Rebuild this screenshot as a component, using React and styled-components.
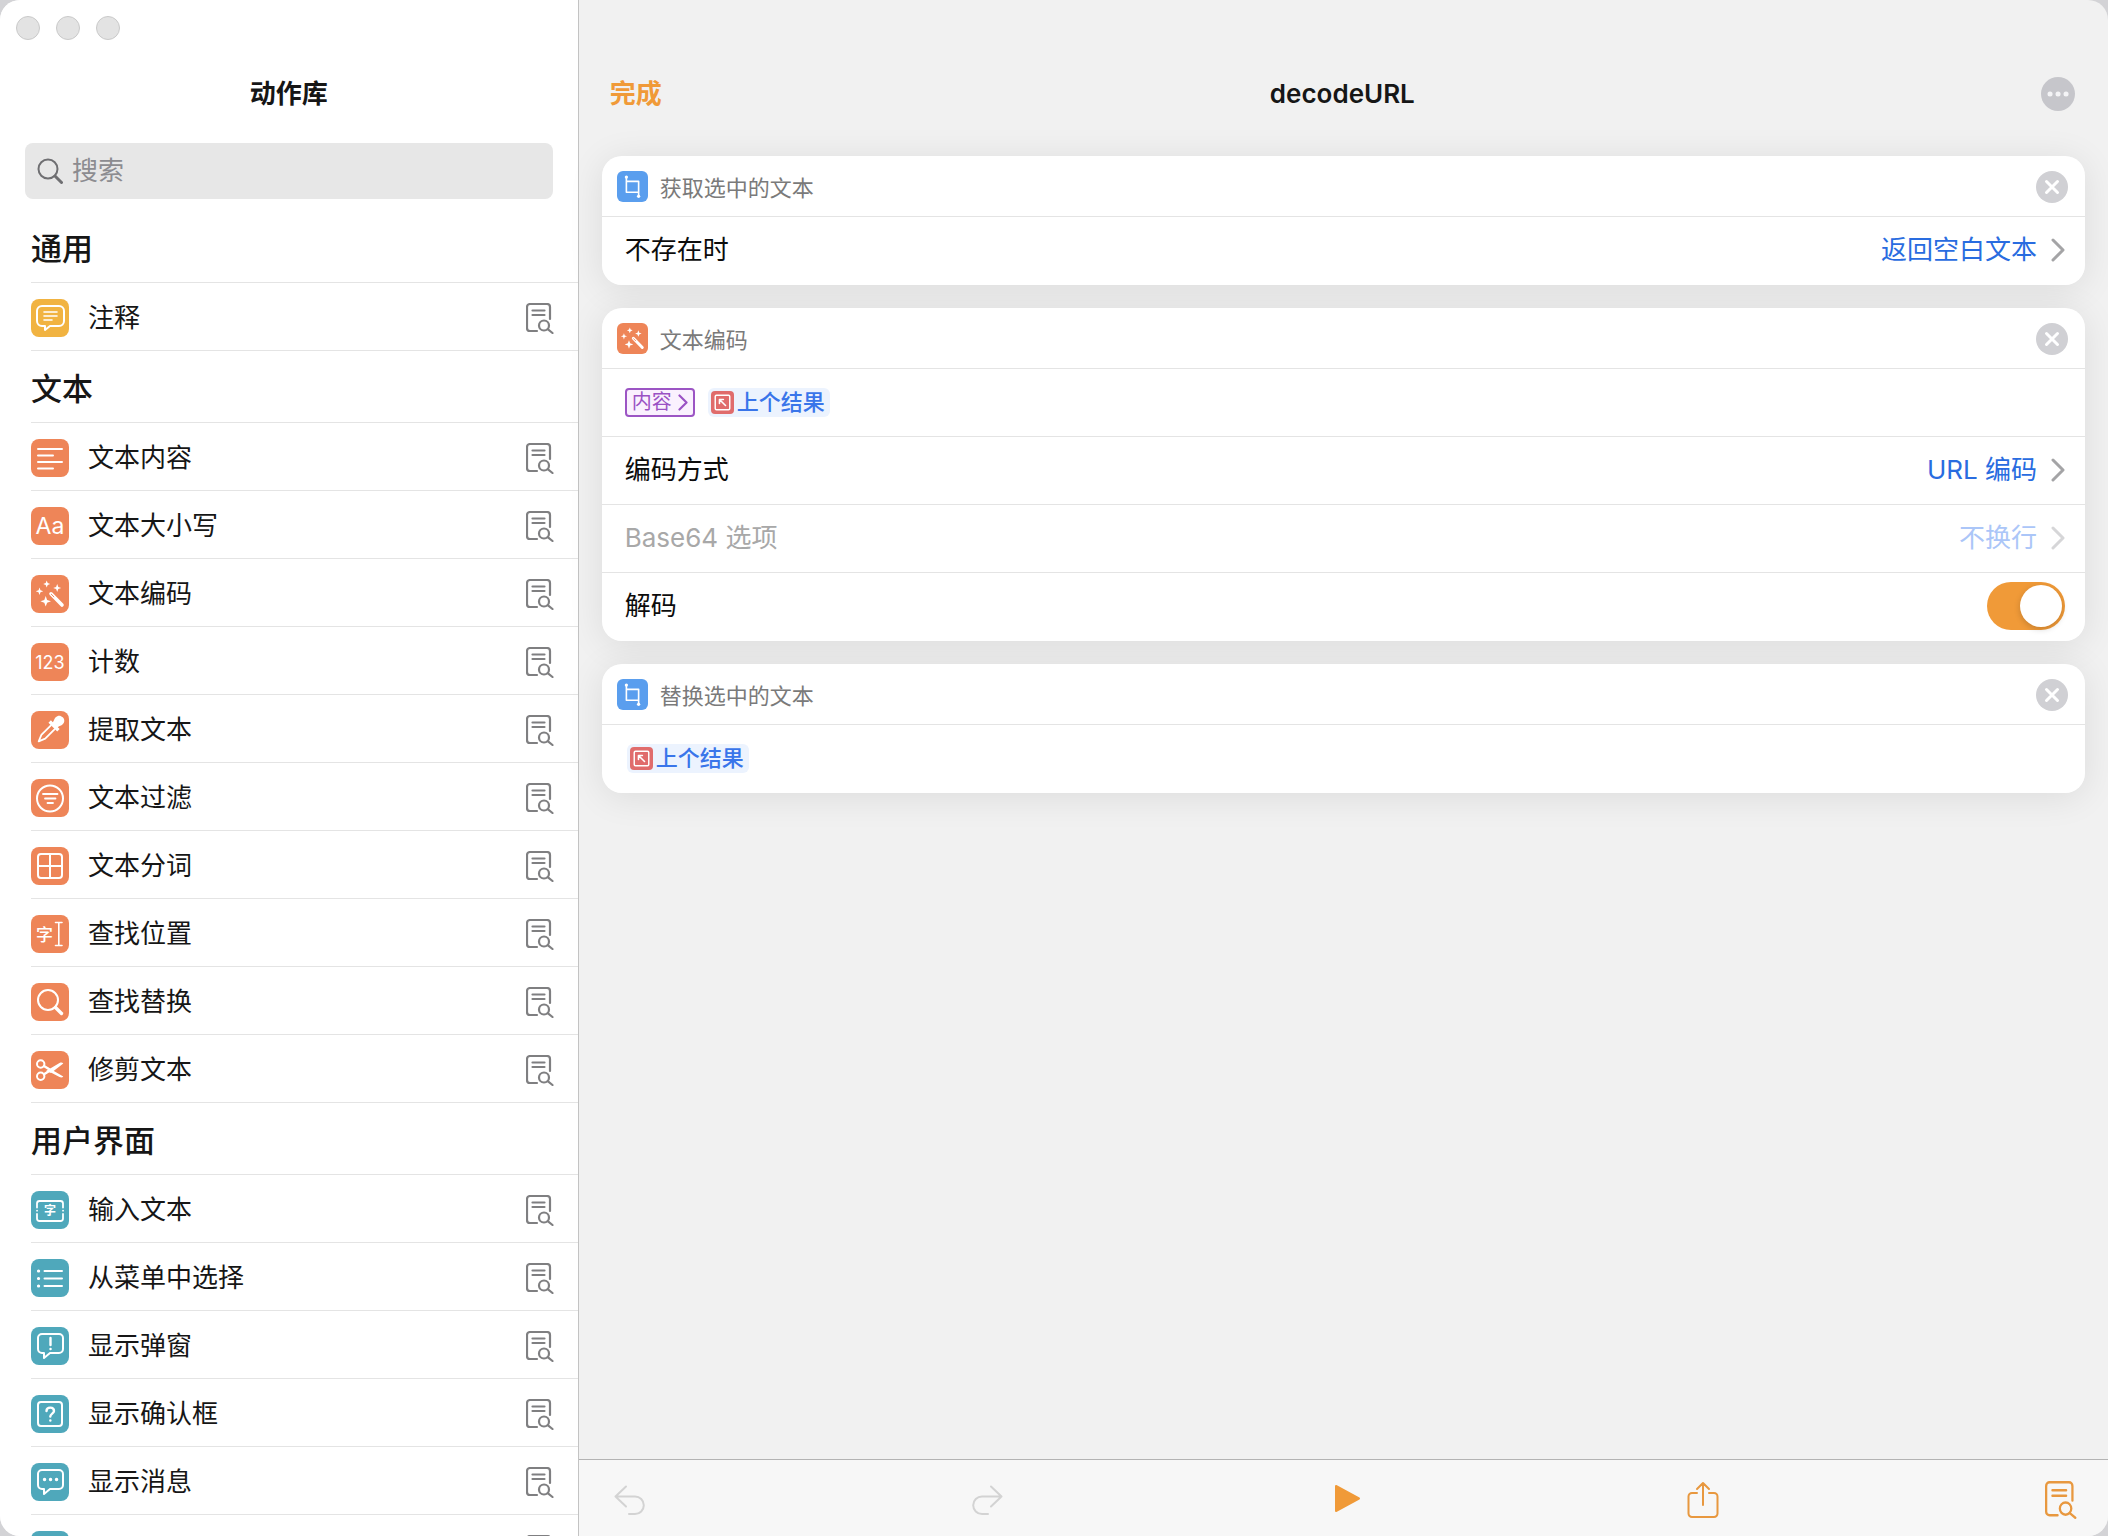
import React, { useState } from 'react';
import styled, { createGlobalStyle } from 'styled-components';

const GlobalStyle = createGlobalStyle`
    * {
        box-sizing: border-box;
    }
    body {
        margin: 0;
        background: #d3d3d6;
        color: #161616;
        font-family: Inter, "Noto Sans CJK SC", sans-serif;
        font-size: 26px;
        line-height: 38px;
    }
    button, input {
        font: inherit;
        color: inherit;
    }
    h1, h2, h3, ul {
        margin: 0;
        padding: 0;
    }
    ul {
        list-style: none;
    }
`;

const Window = styled.div`
    display: grid;
    grid-template-columns: minmax(320px, 14fr) 37fr;
    height: 100vh;
    border-radius: 20px;
    overflow: hidden;
    background: #f1f1f1;
`;

const Sidebar = styled.aside`
    display: flex;
    flex-direction: column;
    min-height: 0;
    background: #ffffff;
    border-right: 1px solid #c3c3c3;
`;

const TrafficLights = styled.div`
    display: flex;
    gap: 16px;
    padding: 16px;
`;

const Light = styled.button`
    width: 24px;
    height: 24px;
    padding: 0;
    border: 1px solid #c9c9c9;
    border-radius: 50%;
    background: #e3e3e3;
`;

const SidebarTitle = styled.h1`
    font-size: 26px;
    font-weight: 700;
    line-height: 76px;
    text-align: center;
`;

const SearchBox = styled.label`
    display: flex;
    align-items: center;
    gap: 9px;
    height: 56px;
    margin: 11px 25px 12px;
    padding: 0 12px;
    border-radius: 8px;
    background: #e7e7e7;
    color: #6f6f72;
`;

const SearchInput = styled.input`
    flex: 1;
    min-width: 0;
    padding: 0;
    border: 0;
    outline: 0;
    background: transparent;
    color: #161616;
    &::placeholder {
        color: #8c8c90;
        opacity: 1;
    }
`;

const Library = styled.div`
    flex: 1;
    min-height: 0;
    overflow: hidden;
    padding-left: 31px;
`;

const GroupTitle = styled.h2`
    height: 72px;
    padding-top: 16px;
    border-bottom: 1px solid #e4e4e4;
    font-size: 31px;
    font-weight: 500;
    line-height: 44px;
`;

const ActionItem = styled.li`
    display: flex;
    align-items: center;
    gap: 19px;
    height: 68px;
    padding: 3px 24px 0 0;
    border-bottom: 1px solid #e4e4e4;
`;

const ActionName = styled.span`
    flex: 1;
`;

const Badge = styled.svg`
    flex: none;
    width: ${props => props.$size}px;
    height: ${props => props.$size}px;
    border-radius: ${props => (props.$size > 34 ? 8 : props.$size > 26 ? 6 : 4)}px;
    background: ${props => props.$color};
    fill: none;
    stroke: #ffffff;
    stroke-width: 2;
    stroke-linecap: round;
    stroke-linejoin: round;
    text {
        fill: #ffffff;
        stroke: none;
        text-anchor: middle;
    }
    .solid {
        fill: #ffffff;
        stroke: none;
    }
`;

const Drawing = styled.svg`
    display: block;
    flex: none;
    fill: none;
    stroke: currentColor;
    stroke-width: ${props => props.$weight || 2};
    stroke-linecap: round;
    stroke-linejoin: round;
`;

const PlainButton = styled.button`
    display: flex;
    align-items: center;
    gap: 14px;
    padding: 0;
    border: 0;
    background: none;
    color: ${props => props.$color || 'inherit'};
`;

const Editor = styled.main`
    display: flex;
    flex-direction: column;
    min-width: 0;
    min-height: 0;
`;

const EditorHeader = styled.header`
    display: grid;
    grid-template-columns: 1fr auto 1fr;
    align-items: center;
    height: 132px;
    padding: 56px 33px 0 31px;
`;

const DoneButton = styled(PlainButton)`
    color: #f09a38;
    font-weight: 700;
`;

const EditorTitle = styled.h1`
    font-size: 26px;
    font-weight: 600;
`;

const MoreButton = styled(PlainButton)`
    justify-self: end;
`;

const Flow = styled.div`
    flex: 1;
    display: flex;
    flex-direction: column;
    gap: 23px;
    min-height: 0;
    padding: 24px 23px;
    isolation: isolate;
`;

const Card = styled.section`
    position: relative;
    border-radius: 20px;
    background: #ffffff;
    /* the shadow sits under every card, so that it never tints a neighbour */
    &::before {
        content: "";
        position: absolute;
        inset: 0;
        z-index: -1;
        border-radius: 20px;
        box-shadow: 0 4px 36px rgba(0, 0, 0, 0.09);
    }
`;

const CardHeader = styled.div`
    display: flex;
    align-items: center;
    gap: 12px;
    height: 61px;
    padding: 1px 17px 0 15px;
    border-bottom: 1px solid #e4e4e4;
`;

const CardTitle = styled.h3`
    flex: 1;
    padding-top: 2px;
    color: #7a7a7a;
    font-size: 22px;
    font-weight: 400;
    line-height: 32px;
`;

const CardRow = styled.div`
    display: flex;
    align-items: center;
    gap: 13px;
    height: 68px;
    padding: 0 20px 1px ${props => props.$indent || 23}px;
    border-bottom: 1px solid #e4e4e4;
    &:last-child {
        border-bottom-color: transparent;
    }
`;

const RowLabel = styled.span`
    flex: 1;
    color: ${props => (props.$muted ? '#a8a8a8' : '#0c0c0c')};
`;

const ParamTag = styled.button`
    display: flex;
    align-items: center;
    gap: 6px;
    height: 29px;
    padding: 0 5px;
    border: 2px solid #9c55c4;
    border-radius: 4px;
    background: #faf1fe;
    color: #9a52c4;
    font-size: 20px;
    line-height: 24px;
`;

const VariablePill = styled.button`
    display: flex;
    align-items: center;
    gap: 3px;
    height: 29px;
    padding: 0 5px 0 3px;
    border: 0;
    border-radius: 6px;
    background: #ecf3fe;
    color: #3975ea;
    font-size: 22px;
    font-weight: 500;
    line-height: 28px;
`;

const Switch = styled.input`
    appearance: none;
    width: 78px;
    height: 48px;
    margin: 0;
    padding: 3px;
    border-radius: 24px;
    background: ${props => (props.checked ? '#f09a38' : '#dddddd')};
    &::before {
        content: "";
        display: block;
        width: 42px;
        height: 42px;
        margin-left: ${props => (props.checked ? 30 : 0)}px;
        border-radius: 50%;
        background: #ffffff;
        box-shadow: 0 2px 6px rgba(0, 0, 0, 0.18);
    }
`;

const Toolbar = styled.footer`
    display: flex;
    align-items: center;
    justify-content: space-between;
    height: 77px;
    padding: 4px 31px 0 35px;
    border-top: 1px solid #b3b3b3;
    background: #f7f7f7;
`;

const bubble = 'M11 7h17a4 4 0 0 1 4 4v11a4 4 0 0 1-4 4h-9l-6 5v-5h-2a4 4 0 0 1-4-4V11a4 4 0 0 1 4-4z';

const glyphs = {
    comment: (
        <>
            <path d="M11 7h17a5 5 0 0 1 5 5v10a5 5 0 0 1-5 5h-9l-5 4v-4h-3a5 5 0 0 1-5-5V12a5 5 0 0 1 5-5z" />
            <path d="M13 13h13M13 17h13M13 21h8" strokeWidth="1.6" />
        </>
    ),
    lines: <path d="M7 10h24M7 16.5h15M7 23h24M7 29.5h15" />,
    letters: <text x="19" y="27" fontSize="23">Aa</text>,
    wand: (
        <>
            <path
                className="solid"
                d="M8.5 12.5l1 2.8 2.8 1-2.8 1-1 2.8-1-2.8-2.8-1 2.8-1zM15.7 5.5l1 2.5 2.5 1-2.5 1-1 2.5-1-2.5-2.5-1 2.5-1zM26.2 9l1.1 2.9 2.9 1.1-2.9 1.1-1.1 2.9-1.1-2.9-2.9-1.1 2.9-1.1zM14.7 21l1.4 3.9 3.9 1.4-3.9 1.4-1.4 3.9-1.4-3.9-3.9-1.4 3.9-1.4z"
            />
            <path d="M20 18.8l11 11.2" strokeWidth="3.6" />
            <path d="M20.3 19.2l2.6 2.6" stroke="#ee8558" strokeWidth="1" />
        </>
    ),
    digits: <text x="19" y="25.5" fontSize="18">123</text>,
    dropper: (
        <g transform="rotate(45 19 19)">
            <path className="solid" d="M19 1c3.2 0 5 2.2 5 5 0 2.2-1.2 3.4-1.5 5.5h2.7V15H12.800v-3.500h2.700C15.200 9.400 14 8.200 14 6c0-2.800 1.800-5 5-5z" />
            <path d="M16.3 15v13.500l2.700 6.500 2.700-6.500V15" strokeWidth="1.8" />
        </g>
    ),
    filter: (
        <>
            <circle cx="19" cy="19.5" r="13" />
            <path d="M12 15h14.5M14 19.5h10.5M16.5 24h5.5" strokeWidth="1.8" />
        </>
    ),
    grid: (
        <>
            <rect x="7" y="7" width="24" height="24" rx="3" />
            <path d="M19 7v24M7 19h24" />
        </>
    ),
    cursor: (
        <>
            <text x="13.5" y="25.5" fontSize="17" fontWeight="500">字</text>
            <path d="M24.5 7.5h6.5M24.5 30.5h6.5M27.8 7.5v23" strokeWidth="1.6" />
        </>
    ),
    search: (
        <>
            <circle cx="17" cy="17" r="10" />
            <path d="M24.5 24.5l6 6" strokeWidth="3.4" />
        </>
    ),
    scissors: (
        <>
            <circle cx="9.7" cy="13" r="3.7" />
            <circle cx="9.7" cy="25.3" r="3.7" />
            <path d="M13 15l6 3.8M13 23.3l6-3.8" strokeWidth="2.4" />
            <path className="solid" d="M15 20l13.5-8c1.500-.8 3-.6 3.800.5L20 22zM16.500 16.300L32.300 25.500c-.8 1.100-2.300 1.300-3.800.5L17 20z" />
        </>
    ),
    input: (
        <>
            <path d="M6 16.500v-4A2.500 2.500 0 0 1 8.500 10h21a2.500 2.500 0 0 1 2.500 2.500v4M6 23v4.500A2.500 2.500 0 0 0 8.500 30h21a2.500 2.500 0 0 0 2.500-2.500V23M6 19.700h.1M32 19.700h.1" strokeWidth="1.8" />
            <text x="19" y="24" fontSize="12" fontWeight="700">字</text>
        </>
    ),
    list: (
        <>
            <path d="M13.500 12h17.500M13.500 19.500h17.500M13.500 27h17.500" />
            <path d="M7.500 12h.1M7.500 19.500h.1M7.500 27h.1" strokeWidth="3.2" />
        </>
    ),
    alert: (
        <>
            <path d={bubble} />
            <path d="M19.500 11v7M19.500 22h.1" strokeWidth="2.4" />
        </>
    ),
    confirm: (
        <>
            <rect x="7" y="7" width="24" height="24" rx="3" />
            <path d="M15.500 16c0-4.500 7.500-4.500 7.500 0 0 2.500-3.700 2.700-3.700 5.500M19.300 25.500h.1" strokeWidth="2.4" />
        </>
    ),
    message: (
        <>
            <path d={bubble} />
            <path d="M13.500 16.500h.1M19.500 16.500h.1M25.500 16.500h.1" strokeWidth="3.4" />
        </>
    ),
    crop: (
        <>
            <path d="M11.500 7.500V26h15V12.700h-15M26.500 26v5" />
            <circle className="solid" cx="11.5" cy="7.5" r="2" />
            <circle className="solid" cx="26.5" cy="31" r="2" />
        </>
    ),
    result: (
        <>
            <rect x="7" y="7" width="24" height="24" rx="2" strokeWidth="2.4" />
            <path d="M14 20.500V14h6.500M14 14l10 10" strokeWidth="2.6" />
        </>
    ),
};

const yellow = '#f1b341';
const orange = '#ee8558';
const teal = '#4fa8bb';
const blue = '#5a9eee';
const red = '#e06c6c';

const groups = [
    { title: '通用', color: yellow, actions: [['注释', 'comment']] },
    {
        title: '文本',
        color: orange,
        actions: [
            ['文本内容', 'lines'],
            ['文本大小写', 'letters'],
            ['文本编码', 'wand'],
            ['计数', 'digits'],
            ['提取文本', 'dropper'],
            ['文本过滤', 'filter'],
            ['文本分词', 'grid'],
            ['查找位置', 'cursor'],
            ['查找替换', 'search'],
            ['修剪文本', 'scissors'],
        ],
    },
    {
        title: '用户界面',
        color: teal,
        actions: [
            ['输入文本', 'input'],
            ['从菜单中选择', 'list'],
            ['显示弹窗', 'alert'],
            ['显示确认框', 'confirm'],
            ['显示消息', 'message'],
            ['', ''],
        ],
    },
];

const Glyph = ({ name, color, size = 38 }) => (
    <Badge viewBox="0 0 38 38" $size={size} $color={color} aria-hidden="true">
        {glyphs[name]}
    </Badge>
);

const DocIcon = ({ width = 28, height = 31, weight = 2 }) => (
    <Drawing width={width} height={height} viewBox="0 0 28 31" preserveAspectRatio="none" $weight={weight}>
        <path d="M24 16V4a3 3 0 0 0-3-3H4a3 3 0 0 0-3 3v21a3 3 0 0 0 3 3h7" />
        <path d="M6.500 7.500h12M6.500 12h12" />
        <circle cx="18" cy="22.5" r="5" />
        <path d="M21.700 26.200l4.800 3.800" />
    </Drawing>
);

const Chevron = ({ color = '#a4a4a6', width = 14, height = 24, weight = 3 }) => (
    <Drawing width={width} height={height} viewBox="0 0 14 24" color={color} $weight={weight}>
        <path d="M2 2l10 10L2 22" />
    </Drawing>
);

const CloseButton = () => (
    <PlainButton aria-label="移除">
        <Drawing width="32" height="32" viewBox="0 0 32 32" $weight="3" color="#ffffff">
            <circle cx="16" cy="16" r="16" fill="#d0d0d4" stroke="none" />
            <path d="M10.500 10.500l11 11M21.500 10.500l-11 11" />
        </Drawing>
    </PlainButton>
);

const ActionCard = ({ title, icon, color, children }) => (
    <Card>
        <CardHeader>
            <Glyph name={icon} color={color} size={31} />
            <CardTitle>{title}</CardTitle>
            <CloseButton />
        </CardHeader>
        {children}
    </Card>
);

const OptionRow = ({ label, value, muted }) => (
    <CardRow>
        <RowLabel $muted={muted}>{label}</RowLabel>
        <PlainButton $color={muted ? '#abc6f8' : '#296ce0'} disabled={muted}>
            {value}
            <Chevron color={muted ? '#d6d6d8' : '#a4a4a6'} />
        </PlainButton>
    </CardRow>
);

const PreviousResult = () => (
    <VariablePill>
        <Glyph name="result" color={red} size={23} />
        上个结果
    </VariablePill>
);

const ActionLibrary = () => (
    <Sidebar>
        <TrafficLights>
            <Light aria-label="关闭" />
            <Light aria-label="最小化" />
            <Light aria-label="缩放" />
        </TrafficLights>
        <SidebarTitle>动作库</SidebarTitle>
        <SearchBox>
            <Drawing width="26" height="26" viewBox="0 0 26 26">
                <circle cx="11" cy="11" r="9.5" />
                <path d="M18 18l6.500 6.500" strokeWidth="3" />
            </Drawing>
            <SearchInput type="search" placeholder="搜索" aria-label="搜索" />
        </SearchBox>
        <Library>
            {groups.map(group => (
                <section key={group.title}>
                    <GroupTitle>{group.title}</GroupTitle>
                    <ul>
                        {group.actions.map(([name, icon]) => (
                            <ActionItem key={name}>
                                <Glyph name={icon} color={group.color} />
                                <ActionName>{name}</ActionName>
                                <PlainButton $color="#7f7f81" aria-label="文档">
                                    <DocIcon weight={2.2} />
                                </PlainButton>
                            </ActionItem>
                        ))}
                    </ul>
                </section>
            ))}
        </Library>
    </Sidebar>
);

const App = () => {
    const [decode, setDecode] = useState(true);

    return (
        <React.Fragment>
            <GlobalStyle />
            <Window>
                <ActionLibrary />
                <Editor>
                    <EditorHeader>
                        <DoneButton>完成</DoneButton>
                        <EditorTitle>decodeURL</EditorTitle>
                        <MoreButton aria-label="更多">
                            <Drawing width="34" height="34" viewBox="0 0 34 34" $weight="5" color="#f4f4f6">
                                <circle cx="17" cy="17" r="17" fill="#c6c6cb" stroke="none" />
                                <path d="M9 17h.1M17 17h.1M25 17h.1" />
                            </Drawing>
                        </MoreButton>
                    </EditorHeader>

                    <Flow>
                        <ActionCard title="获取选中的文本" icon="crop" color={blue}>
                            <OptionRow label="不存在时" value="返回空白文本" />
                        </ActionCard>

                        <ActionCard title="文本编码" icon="wand" color={orange}>
                            <CardRow>
                                <ParamTag>
                                    内容
                                    <Chevron color="#9a52c4" width={10} height={17} />
                                </ParamTag>
                                <PreviousResult />
                            </CardRow>
                            <OptionRow label="编码方式" value="URL 编码" />
                            <OptionRow label="Base64 选项" value="不换行" muted />
                            <CardRow as="label">
                                <RowLabel>解码</RowLabel>
                                <Switch
                                    type="checkbox"
                                    role="switch"
                                    checked={decode}
                                    onChange={e => setDecode(e.target.checked)}
                                />
                            </CardRow>
                        </ActionCard>

                        <ActionCard title="替换选中的文本" icon="crop" color={blue}>
                            <CardRow $indent={25}>
                                <PreviousResult />
                            </CardRow>
                        </ActionCard>
                    </Flow>

                    <Toolbar>
                        <PlainButton $color="#d3d3d3" aria-label="撤销" disabled>
                            <Drawing width="32" height="31" viewBox="0 0 32 31">
                                <path d="M12 1.500L1.500 11.500 12 21.500M1.500 11.500H21a8.800 8.800 0 0 1 0 17.600h-6" />
                            </Drawing>
                        </PlainButton>
                        <PlainButton $color="#d3d3d3" aria-label="重做" disabled>
                            <Drawing width="32" height="31" viewBox="0 0 32 31">
                                <path d="M20 1.500l10.500 10L20 21.500M30.500 11.500H11a8.800 8.800 0 0 0 0 17.600h6" />
                            </Drawing>
                        </PlainButton>
                        <PlainButton $color="#f09a38" aria-label="运行">
                            <Drawing width="32" height="32" viewBox="0 0 32 32">
                                <path d="M7 2v25l23-12.500z" fill="currentColor" />
                            </Drawing>
                        </PlainButton>
                        <PlainButton $color="#e8983f" aria-label="分享">
                            <Drawing width="32" height="38" viewBox="0 0 32 38">
                                <path d="M10 12H5a3.500 3.500 0 0 0-3.500 3.500v17A3.500 3.500 0 0 0 5 36h22a3.500 3.500 0 0 0 3.500-3.500v-17A3.500 3.500 0 0 0 27 12h-5M16 24V2M10 8l6-6 6 6" />
                            </Drawing>
                        </PlainButton>
                        <PlainButton $color="#e8983f" aria-label="文档">
                            <DocIcon width={32} height={38} />
                        </PlainButton>
                    </Toolbar>
                </Editor>
            </Window>
        </React.Fragment>
    );
};

export default App;
